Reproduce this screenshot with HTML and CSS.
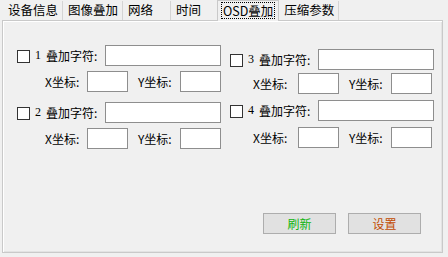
FILE: index.html
```html
<!DOCTYPE html>
<html lang="zh-CN">
<head>
  <meta charset="UTF-8" />
  <title>OSD叠加</title>
  <link rel="stylesheet" href="styles.css">
</head>
<body>

  <div class="tabs">
    <div class="tab">设备信息</div>
    <div class="tab">图像叠加</div>
    <div class="tab tab-short">网络</div>
    <div class="tab tab-short">时间</div>
    <div class="tab active"><span class="focus">OSD叠加</span></div>
    <div class="tab">压缩参数</div>
  </div>

  <div class="panel">
    <div class="cols">
      <div class="col col-left">
        <div class="item">
          <div class="row">
            <span class="cb"></span>
            <span class="num">1</span>
            <span class="lbl lbl-main">叠加字符:</span>
            <span class="field field-text"></span>
          </div>
          <div class="row sub">
            <span class="lbl">X坐标:</span>
            <span class="field field-xy"></span>
            <span class="lbl lbl-y">Y坐标:</span>
            <span class="field field-xy"></span>
          </div>
        </div>
        <div class="item">
          <div class="row">
            <span class="cb"></span>
            <span class="num">2</span>
            <span class="lbl lbl-main">叠加字符:</span>
            <span class="field field-text"></span>
          </div>
          <div class="row sub">
            <span class="lbl">X坐标:</span>
            <span class="field field-xy"></span>
            <span class="lbl lbl-y">Y坐标:</span>
            <span class="field field-xy"></span>
          </div>
        </div>
      </div>

      <div class="col col-right">
        <div class="item">
          <div class="row">
            <span class="cb"></span>
            <span class="num">3</span>
            <span class="lbl lbl-main">叠加字符:</span>
            <span class="field field-text"></span>
          </div>
          <div class="row sub">
            <span class="lbl">X坐标:</span>
            <span class="field field-xy"></span>
            <span class="lbl lbl-y">Y坐标:</span>
            <span class="field field-xy"></span>
          </div>
        </div>
        <div class="item">
          <div class="row">
            <span class="cb"></span>
            <span class="num">4</span>
            <span class="lbl lbl-main">叠加字符:</span>
            <span class="field field-text"></span>
          </div>
          <div class="row sub">
            <span class="lbl">X坐标:</span>
            <span class="field field-xy"></span>
            <span class="lbl lbl-y">Y坐标:</span>
            <span class="field field-xy"></span>
          </div>
        </div>
      </div>
    </div>

    <div class="actions">
      <button class="btn btn-refresh">刷新</button>
      <button class="btn btn-set">设置</button>
    </div>
  </div>

</body>
</html>
```

FILE: styles.css
```css
body {
  margin: 0;
  background-color: #f0f0f0;
  color: #000;
  font-family: "Noto Sans CJK SC", "DejaVu Sans", sans-serif;
  font-size: 12px;
  width: 448px;
  height: 257px;
  overflow: hidden;
}

/* tab strip */
.tabs {
  display: flex;
  align-items: flex-end;
  height: 20px;
  padding-left: 3px;
}

.tab {
  height: 19px;
  box-sizing: border-box;
  padding: 0 4px 0 5px;
  font-size: 12.5px;
  line-height: 18px;
  border-right: 1px solid #d4d4d4;
  white-space: nowrap;
}

.tab-short {
  width: 48px;
}

.tab.active {
  padding: 1px 3px 0 3px;
  background-color: #f0f0f0;
  border: 1px solid #c9c9c9;
  border-bottom: none;
  position: relative;
  z-index: 1;
  margin-bottom: -1px;
  margin-left: -2px;
  height: 21px;
}

.focus {
  display: inline-block;
  border: 1px dotted #000;
  line-height: 15px;
  padding: 0 1px;
}

/* panel */
.panel {
  margin: 0 5px 0 2px;
  height: 233px;
  box-sizing: border-box;
  border: 1px solid #c9c9c9;
  box-shadow: inset 1px 1px 0 #fff, inset -1px -1px 0 #e3e3e3;
  display: flex;
  flex-direction: column;
}

.cols {
  display: grid;
  grid-template-columns: 213px 1fr;
  padding-left: 14px;
}

.col-left {
  padding-top: 24px;
}

.col-right {
  padding-top: 28px;
}

.item {
  display: flex;
  flex-direction: column;
  gap: 5px;
}

.col-left .item + .item {
  margin-top: 10px;
}

.col-right .item {
  gap: 3px;
}

.col-right .item + .item {
  margin-top: 6px;
  gap: 6px;
}

.row {
  display: flex;
  align-items: center;
  height: 21px;
}

.cb {
  width: 11px;
  height: 11px;
  border: 1px solid #333;
  background-color: #fff;
  margin-top: 2px;
}

.num {
  font-family: "Liberation Serif", serif;
  font-size: 12px;
  margin-left: 5px;
  width: 11px;
}

.lbl {
  white-space: nowrap;
}

.lbl-main {
  width: 59px;
}

.field {
  height: 21px;
  box-sizing: border-box;
  background-color: #fff;
  border: 1px solid #8e8e8e;
}

.field-text {
  width: 116px;
}

.field-xy {
  width: 41px;
}

.sub {
  padding-left: 28px;
}

.sub .lbl {
  width: 42px;
}

.sub .lbl-y {
  margin-left: 10px;
}

.col-right .sub {
  padding-left: 23px;
}

.col-right .sub .lbl {
  width: 45px;
}

.col-right .sub .lbl-y {
  margin-left: 10px;
  width: 42px;
}

/* bottom buttons */
.actions {
  margin-top: auto;
  display: flex;
  justify-content: flex-end;
  gap: 12px;
  padding: 0 21px 18px 0;
}

.btn {
  width: 73px;
  height: 21px;
  background-color: #e1e1e1;
  border: 1px solid #adadad;
  font-family: "Noto Sans CJK SC", sans-serif;
  font-size: 12px;
  padding: 0;
  line-height: 18px;
}

.btn-refresh {
  color: #0fb50f;
}

.btn-set {
  color: #c14a00;
}
```
